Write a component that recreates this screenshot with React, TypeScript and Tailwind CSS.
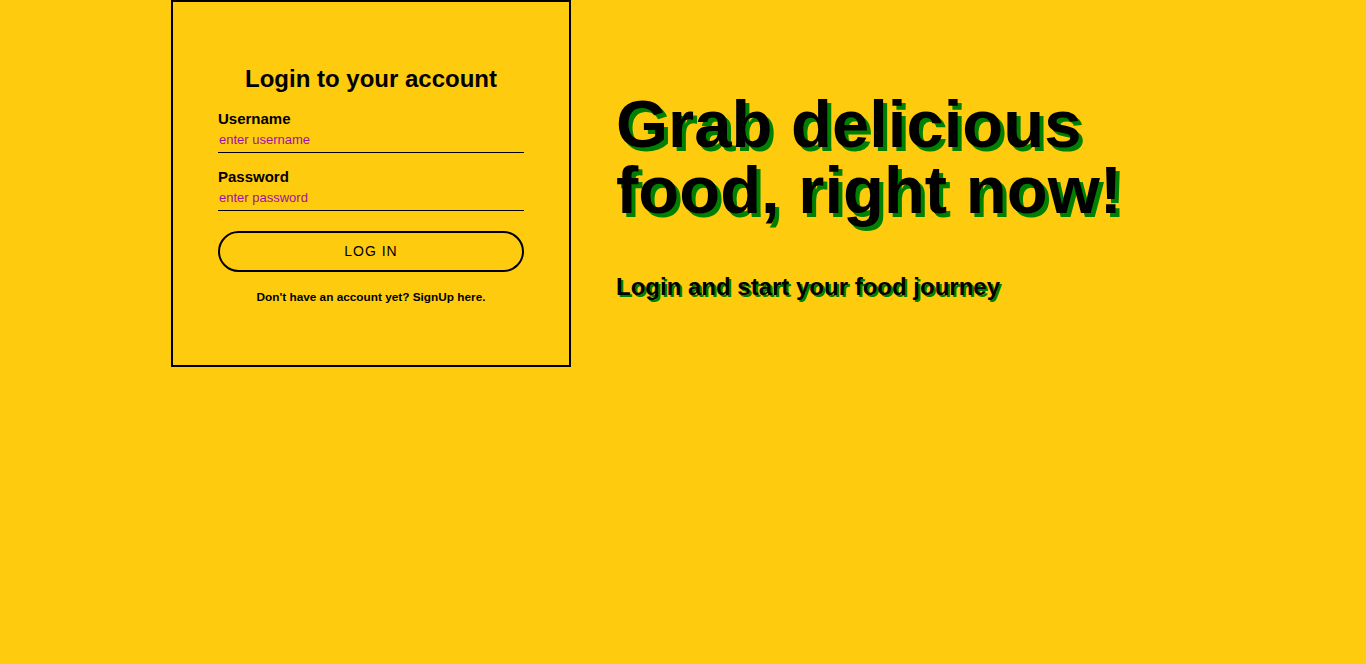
import { useState } from 'react';

export default function App() {
  const [username, setUsername] = useState('');
  const [password, setPassword] = useState('');

  return (
    <div className="min-h-screen w-full bg-[#ffcb0f] text-black font-['Liberation_Sans',Arial,sans-serif]">
      <div className="mx-auto flex w-[1024px] items-start">
        {/* login card */}
        <div className="w-[400px] h-[367px] border-2 border-black px-[45px] pt-[63px]">
          <h1 className="text-center text-[24px] leading-[28px] font-bold">Login to your account</h1>

          <form className="mt-[17px]" onSubmit={(e) => e.preventDefault()}>
            <label className="block text-[15px] leading-[18px] font-bold">Username</label>
            <input
              type="text"
              value={username}
              onChange={(e) => setUsername(e.target.value)}
              placeholder="enter username"
              className="mt-[3px] block w-full h-[22px] border-b border-black bg-transparent px-[1px] pb-[5px] text-[13px] outline-none placeholder:text-[#9c12a4]"
            />

            <label className="mt-[15px] block text-[15px] leading-[18px] font-bold">Password</label>
            <input
              type="password"
              value={password}
              onChange={(e) => setPassword(e.target.value)}
              placeholder="enter password"
              className="mt-[3px] block w-full h-[22px] border-b border-black bg-transparent px-[1px] pb-[5px] text-[13px] outline-none placeholder:text-[#9c12a4]"
            />

            <button
              type="submit"
              className="mt-[20px] block w-full h-[41px] rounded-full border-2 border-black bg-transparent text-[14px] tracking-[1px] cursor-pointer"
            >
              LOG IN
            </button>

            <p className="mt-[18px] text-center text-[11.8px] leading-[14px] font-bold">
              Don't have an account yet? SignUp here.
            </p>
          </form>
        </div>

        {/* hero text */}
        <div className="pl-[45px] pt-[91px]">
          <h2 className="text-[67px] leading-[66px] font-bold [text-shadow:4px_4px_0_#008000]">
            <span className="block">Grab delicious</span>
            <span className="block">food, right now!</span>
          </h2>
          <p className="mt-[50px] text-[24px] leading-[28px] font-bold [text-shadow:2px_2px_0_#008000]">
            Login and start your food journey
          </p>
        </div>
      </div>
    </div>
  );
}
